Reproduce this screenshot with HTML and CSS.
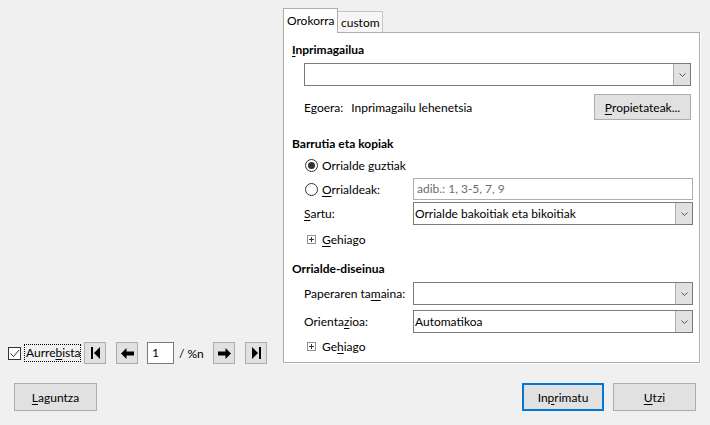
FILE: index.html
```html
<!DOCTYPE html>
<html lang="eu">
<head>
<meta charset="utf-8">
<title>Inprimatu</title>
<link rel="stylesheet" href="styles.css">
</head>
<body>
<div class="dialog">
  <div class="main">
    <div class="preview-col">
      <div class="preview-bar">
        <span class="check"><svg width="11" height="11" viewBox="0 0 11 11"><path d="M1.5 5.5 L4.5 8.5 L10 2" fill="none" stroke="#333" stroke-width="1"/></svg></span>
        <span class="check-label">Aurre<u>b</u>ista</span>
        <span class="nav nav-first"><svg width="9" height="12" viewBox="0 0 9 12"><rect x="0" y="0" width="2" height="12"/><path d="M9 0 L3 6 L9 12 Z"/></svg></span>
        <span class="nav nav-prev"><svg width="13" height="11" viewBox="0 0 13 11"><path d="M0 5.5 L5.5 0 V3.5 H13 V7.5 H5.5 V11 Z"/></svg></span>
        <span class="page-input">1</span>
        <span class="page-total">/ %n</span>
        <span class="nav nav-next"><svg width="13" height="11" viewBox="0 0 13 11"><path d="M13 5.5 L7.5 0 V3.5 H0 V7.5 H7.5 V11 Z"/></svg></span>
        <span class="nav nav-last"><svg width="9" height="12" viewBox="0 0 9 12"><path d="M0 0 L6 6 L0 12 Z"/><rect x="7" y="0" width="2" height="12"/></svg></span>
      </div>
    </div>
    <div class="tabs-col">
      <div class="tab-strip">
        <div class="tab tab-active">Orokorra</div>
        <div class="tab tab-inactive">custom</div>
      </div>
      <div class="panel">
        <div class="heading h-first"><u>I</u>nprimagailua</div>
        <div class="combo combo-printer">
          <span class="combo-value"></span>
          <span class="combo-btn"><svg width="7" height="4" viewBox="0 0 7 4"><path d="M0.5 0.5 L3.5 3.5 L6.5 0.5" fill="none" stroke="#555" stroke-width="1"/></svg></span>
        </div>
        <div class="status-row">
          <span class="status-label">Egoera:</span>
          <span class="status-value">Inprimagailu lehenetsia</span>
          <span class="btn btn-props"><u>P</u>ropietateak...</span>
        </div>

        <div class="heading h-range">Barrutia eta kopiak</div>
        <div class="radio-row r-all">
          <span class="radio radio-on"><span class="dot"></span></span>
          <span>Orrialde <u>g</u>uztiak</span>
        </div>
        <div class="field-row r-pages">
          <span class="field-label radio-label"><span class="radio"></span><span><u>O</u>rrialdeak:</span></span>
          <span class="text-input placeholder">adib.: 1, 3-5, 7, 9</span>
        </div>
        <div class="field-row r-insert">
          <span class="field-label"><u>S</u>artu:</span>
          <div class="combo">
            <span class="combo-value">Orrialde bakoitiak eta bikoitiak</span>
            <span class="combo-btn"><svg width="7" height="4" viewBox="0 0 7 4"><path d="M0.5 0.5 L3.5 3.5 L6.5 0.5" fill="none" stroke="#555" stroke-width="1"/></svg></span>
          </div>
        </div>
        <div class="more-row m-first">
          <span class="plus"></span>
          <span><u>G</u>ehiago</span>
        </div>

        <div class="heading h-layout">Orrialde-diseinua</div>
        <div class="field-row r-paper">
          <span class="field-label">Paperaren ta<u>m</u>aina:</span>
          <div class="combo">
            <span class="combo-value"></span>
            <span class="combo-btn"><svg width="7" height="4" viewBox="0 0 7 4"><path d="M0.5 0.5 L3.5 3.5 L6.5 0.5" fill="none" stroke="#555" stroke-width="1"/></svg></span>
          </div>
        </div>
        <div class="field-row r-orient">
          <span class="field-label">Orienta<u>z</u>ioa:</span>
          <div class="combo">
            <span class="combo-value">Automatikoa</span>
            <span class="combo-btn"><svg width="7" height="4" viewBox="0 0 7 4"><path d="M0.5 0.5 L3.5 3.5 L6.5 0.5" fill="none" stroke="#555" stroke-width="1"/></svg></span>
          </div>
        </div>
        <div class="more-row m-second">
          <span class="plus"></span>
          <span>Ge<u>h</u>iago</span>
        </div>
      </div>
    </div>
  </div>
  <div class="footer">
    <span class="btn btn-foot"><u>L</u>aguntza</span>
    <span class="spacer"></span>
    <span class="btn btn-foot btn-default">In<u>p</u>rimatu</span>
    <span class="btn btn-foot btn-cancel"><u>U</u>tzi</span>
  </div>
</div>
</body>
</html>
```
FILE: styles.css
```css
html, body {
  margin: 0;
  padding: 0;
}
body {
  background: #f0f0f0;
  font-family: Lato, "Noto Sans", sans-serif;
  font-size: 12px;
  color: #000;
  width: 710px;
  height: 425px;
  overflow: hidden;
}
u {
  text-decoration: underline;
  text-underline-offset: 2px;
}
.dialog {
  display: flex;
  flex-direction: column;
}
.main {
  display: flex;
  height: 364px;
  padding-top: 8px;
  box-sizing: border-box;
}
.preview-col {
  width: 283px;
  display: flex;
  flex-direction: column;
  justify-content: flex-end;
}
.preview-bar {
  display: flex;
  align-items: center;
  height: 22px;
  padding-left: 8px;
}
.check {
  width: 13px;
  height: 13px;
  box-sizing: border-box;
  border: 1px solid #333;
  background: #fff;
  display: flex;
  align-items: center;
  justify-content: center;
}
.check-label {
  margin-left: 3px;
  border: 1px dotted #000;
  padding: 0 0 0 1px;
  width: 57px;
  box-sizing: border-box;
  height: 18px;
  line-height: 16px;
  white-space: nowrap;
}
.nav {
  width: 22px;
  height: 22px;
  box-sizing: border-box;
  background: #e1e1e1;
  border: 1px solid #adadad;
  display: flex;
  align-items: center;
  justify-content: center;
}
.nav svg {
  fill: #000;
}
.nav-first { margin-left: 3px; }
.nav-prev { margin-left: 10px; }
.nav-next { margin-left: 0; }
.nav-last { margin-left: 10px; }
.page-input {
  margin-left: 9px;
  width: 27px;
  height: 22px;
  box-sizing: border-box;
  border: 1px solid #7a7a7a;
  background: #fff;
  padding-left: 4px;
  line-height: 20px;
}
.page-total {
  width: 39px;
  padding-left: 5px;
  box-sizing: border-box;
}
.tabs-col {
  width: 417px;
}
.tab-strip {
  display: flex;
  align-items: flex-end;
  height: 25px;
  margin-bottom: -1px;
  position: relative;
  z-index: 1;
}
.tab {
  box-sizing: border-box;
  border: 1px solid #c4c4c4;
  border-bottom: none;
  white-space: nowrap;
}
.tab-active {
  height: 25px;
  width: 55px;
  background: #fff;
  border-color: #adadad;
  padding: 4px 0 0 3px;
  line-height: 16px;
}
.tab-inactive {
  height: 21px;
  width: 45px;
  margin-bottom: 1px;
  border-left: none;
  background: #f6f6f6;
  padding: 3px 0 0 3px;
  line-height: 16px;
}
.panel {
  height: 331px;
  box-sizing: border-box;
  border: 1px solid #adadad;
  box-shadow: 1px 1px 0 #fdfdfd;
  background: #fff;
  padding: 0 6px 0 8px;
  display: flex;
  flex-direction: column;
}
.heading {
  font-weight: bold;
  height: 16px;
  line-height: 16px;
  white-space: nowrap;
}
.h-first { margin-top: 9px; }
.h-range { margin-top: 16px; }
.h-layout { margin-top: 14px; }
.combo {
  display: flex;
  height: 23px;
  box-sizing: border-box;
  border: 1px solid #7a7a7a;
  background: #fff;
  flex: 1;
}
.combo-value {
  flex: 1;
  line-height: 21px;
  padding-left: 1px;
  white-space: nowrap;
}
.combo-btn {
  width: 17px;
  box-sizing: border-box;
  background: #e1e1e1;
  border-left: 1px solid #adadad;
  display: flex;
  align-items: center;
  justify-content: center;
}
.combo-printer {
  flex: none;
  margin: 5px 2px 0 12px;
}
.status-row {
  display: flex;
  align-items: center;
  height: 26px;
  margin: 8px 2px 0 12px;
}
.status-value {
  margin-left: 8px;
}
.btn {
  display: flex;
  align-items: center;
  justify-content: center;
  box-sizing: border-box;
  background: #e1e1e1;
  border: 1px solid #adadad;
  white-space: nowrap;
}
.btn-props {
  margin-left: auto;
  width: 97px;
  height: 26px;
}
.radio-row {
  display: flex;
  align-items: center;
  height: 16px;
  margin: 5px 0 0 12px;
}
.radio {
  width: 13px;
  height: 13px;
  box-sizing: border-box;
  border: 1px solid #333;
  border-radius: 50%;
  background: #fff;
  display: inline-flex;
  align-items: center;
  justify-content: center;
  margin: 0 4px 0 1px;
  flex: none;
}
.dot {
  width: 7px;
  height: 7px;
  border-radius: 50%;
  background: #333;
}
.field-row {
  display: flex;
  align-items: center;
  margin-left: 12px;
}
.field-label {
  width: 109px;
  flex: none;
  white-space: nowrap;
}
.radio-label {
  display: flex;
  align-items: center;
}
.r-pages { margin-top: 5px; height: 22px; }
.r-insert { margin-top: 2px; }
.r-paper { margin-top: 5px; }
.r-orient { margin-top: 5px; }
.text-input {
  flex: 1;
  height: 22px;
  box-sizing: border-box;
  border: 1px solid #adadad;
  background: #fff;
  line-height: 20px;
  padding-left: 3px;
}
.placeholder {
  color: #6d6d6d;
}
.more-row {
  display: flex;
  align-items: center;
  height: 16px;
  margin-left: 15px;
}
.m-first { margin-top: 6px; }
.m-second { margin-top: 5px; }
.plus {
  width: 9px;
  height: 9px;
  box-sizing: border-box;
  border: 1px solid #919191;
  margin-right: 6px;
  background:
    linear-gradient(#333, #333) center / 5px 1px no-repeat,
    linear-gradient(#333, #333) center / 1px 5px no-repeat,
    #fff;
}
.footer {
  display: flex;
  padding: 19px 14px 0 14px;
}
.spacer { flex: 1; }
.btn-foot {
  width: 83px;
  height: 28px;
}
.btn-default {
  width: 82px;
  border: 2px solid #0078d7;
}
.btn-cancel {
  margin-left: 9px;
}
```
